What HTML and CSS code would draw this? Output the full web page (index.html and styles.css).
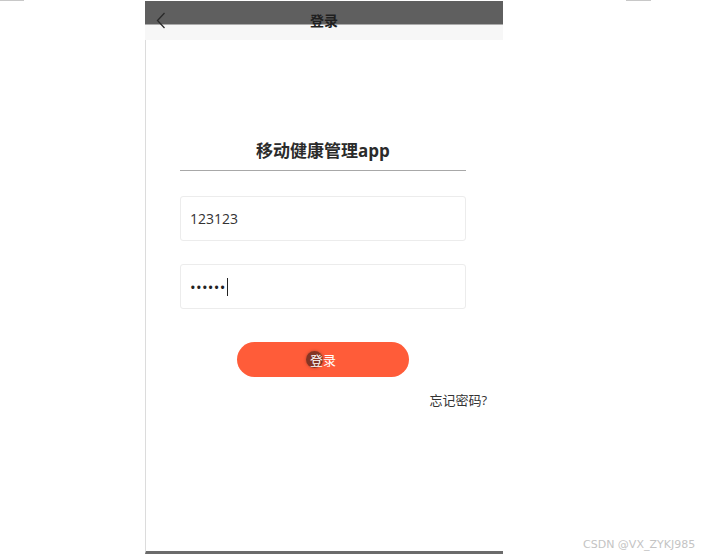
FILE: index.html
```html
<!DOCTYPE html>
<html lang="zh">
<head>
<meta charset="utf-8">
<title>登录</title>
<link rel="stylesheet" href="styles.css">
</head>
<body>
<div class="mark mark-left"></div>
<div class="mark mark-right"></div>
<div class="phone">
  <header class="nav">
    <div class="nav-dark"></div>
    <div class="nav-light"></div>
    <svg class="back" width="12" height="17" viewBox="0 0 12 17"><path d="M9.5 1 L2.5 8.5 L9.5 16" fill="none" stroke="#2a2a2a" stroke-width="1.3"/></svg>
    <span class="nav-title">登录</span>
  </header>
  <main class="content">
    <h1 class="app-title">移动健康管理app</h1>
    <div class="field"><span class="value">123123</span></div>
    <div class="field"><span class="dots">••••••</span><span class="caret"></span></div>
    <div class="btn-row">
      <button class="login-btn"><span class="ripple"></span><span class="btn-text">登录</span></button>
    </div>
    <div class="forgot">忘记密码?</div>
  </main>
</div>
<div class="watermark">CSDN @VX_ZYKJ985</div>
</body>
</html>
```
FILE: styles.css
```css
html, body {
  margin: 0;
  padding: 0;
}
body {
  width: 717px;
  height: 558px;
  background: #fff;
  position: relative;
  overflow: hidden;
  font-family: "Open Sans", "Noto Sans CJK SC", sans-serif;
}
.mark {
  position: absolute;
  top: 0;
  height: 1px;
  background: #c8c8c8;
}
.mark-left { left: 0; width: 24px; }
.mark-right { left: 626px; width: 25px; }

.phone {
  margin-left: 145px;
  padding-top: 1px;
  width: 358px;
  display: flex;
  flex-direction: column;
}
.nav {
  position: relative;
  display: flex;
  flex-direction: column;
}
.nav-dark {
  height: 23px;
  background: #5f5f5f;
  border-bottom: 1px solid #ababab;
}
.nav-light {
  height: 15px;
  background: #f7f7f7;
}
.back {
  position: absolute;
  left: 10px;
  top: 11px;
}
.nav-title {
  position: absolute;
  left: 0;
  right: 0;
  top: 10px;
  text-align: center;
  font-size: 14px;
  font-weight: bold;
  color: #1f1f1f;
  line-height: 20px;
}
.content {
  height: 511px;
  border-left: 1px solid #dcdcdc;
  border-bottom: 3px solid #6b6b6b;
  display: flex;
  flex-direction: column;
  padding: 0 37px 0 34px;
}
.app-title {
  margin: 99px 0 0;
  font-size: 17px;
  font-weight: bold;
  color: #2b2b2b;
  text-align: center;
  line-height: 24px;
  padding-bottom: 7px;
  border-bottom: 1px solid #a8a8a8;
}
.field {
  margin-top: 25px;
  height: 43px;
  border: 1px solid #ececec;
  border-radius: 3px;
  display: flex;
  align-items: center;
  padding-left: 9px;
  font-size: 14px;
  color: #333;
}
.field + .field { margin-top: 23px; }
.dots {
  font-size: 15px;
  letter-spacing: 0.3px;
  color: #222;
}
.caret {
  display: inline-block;
  width: 1px;
  height: 18px;
  background: #222;
  margin-left: 1px;
}
.btn-row {
  margin-top: 33px;
  display: flex;
  justify-content: center;
}
.login-btn {
  position: relative;
  width: 172px;
  height: 35px;
  border: none;
  border-radius: 18px;
  background: #ff5c39;
  padding: 0;
  font-family: inherit;
  font-size: 13px;
  color: #fff;
  display: flex;
  align-items: center;
  justify-content: center;
}
.ripple {
  position: absolute;
  left: 69px;
  top: 9px;
  width: 17px;
  height: 17px;
  border-radius: 50%;
  background: rgba(90, 40, 30, 0.75);
  box-shadow: 0 0 3px rgba(90, 40, 30, 0.5);
}
.btn-text { position: relative; }
.forgot {
  margin-top: 13px;
  margin-right: -21px;
  text-align: right;
  font-size: 13px;
  color: #333;
}
.watermark {
  position: absolute;
  left: 583px;
  top: 538px;
  font-family: "DejaVu Sans", sans-serif;
  font-size: 11px;
  color: #c4c4c4;
}
```
